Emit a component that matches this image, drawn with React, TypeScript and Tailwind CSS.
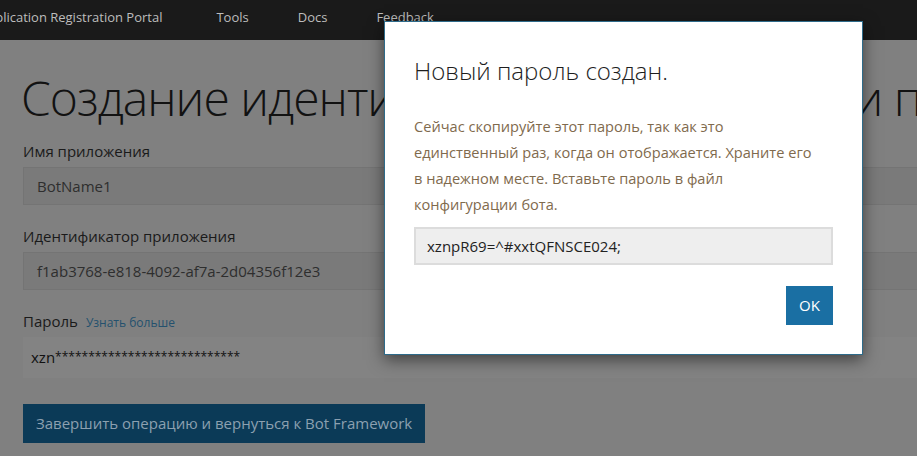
import React from 'react'

const font = { fontFamily: '"Open Sans", "Noto Sans", Arial, sans-serif' }

function Field({ label, value, extra, tall }: { label: string; value: React.ReactNode; extra?: string; tall?: boolean }) {
  return (
    <div className="mb-[21px]">
      <div className="flex items-baseline gap-[8px] h-[20px] leading-[20px] mb-[6px]">
        <span className="text-[15px] text-[#1a1a1a]">{label}</span>
        {extra && <span className="text-[12px] text-[#24516e]">{extra}</span>}
      </div>
      <div
        className={
          tall
            ? 'w-[960px] h-[41px] bg-[#838383] flex items-center px-[8px] text-[15px] text-[#111]'
            : 'w-[960px] h-[38px] bg-[#7a7a7a] border border-[#747474] flex items-center px-[13px] text-[15px] text-[#2e2e2e]'
        }
      >
        {value}
      </div>
    </div>
  )
}

export default function App() {
  return (
    <div className="relative w-[917px] h-[456px] overflow-hidden bg-[#808080]" style={font}>
      <nav className="h-[40px] bg-[#1a1a1a] flex items-center text-[13px] text-[#bdbdbd] pb-[5px] overflow-hidden whitespace-nowrap">
        <span className="-ml-[21px]">Application Registration Portal</span>
        <span className="ml-[54px]">Tools</span>
        <span className="ml-[49px]">Docs</span>
        <span className="ml-[49px]">Feedback</span>
      </nav>

      <main className="px-[23px]">
        <h1 className="mt-[28px] mb-[13px] -ml-[2px] text-[48px] leading-[60px] font-light tracking-[-1px] text-[#121212] whitespace-nowrap">
          Создание иденти<span className="tracking-[-3px]">фикатора приложения </span>и пароля
        </h1>
        <Field label="Имя приложения" value="BotName1" />
        <Field label="Идентификатор приложения" value="f1ab3768-e818-4092-af7a-2d04356f12e3" />
        <Field
          label="Пароль"
          extra="Узнать больше"
          tall
          value={
            <>
              xzn<span className="text-[12px] -mt-[2px]">****************************</span>
            </>
          }
        />
        <button className="mt-[5px] h-[39px] px-[13px] bg-[#0b3a57] text-[15px] text-[#8ca0b0]">
          Завершить операцию и вернуться к Bot Framework
        </button>
      </main>

      <div className="absolute left-[384px] top-[21px] w-[479px] h-[334px] bg-white border border-[#2e6b8a] shadow-[0_5px_15px_rgba(0,0,0,0.5)] px-[29px] pt-[32px]">
        <h2 className="text-[24px] leading-[34px] font-light text-[#1e1e1e]">Новый пароль создан.</h2>
        <p className="mt-[25px] text-[14.6px] leading-[26px] text-[#7f6a4d]">
          Сейчас скопируйте этот пароль, так как это
          <br />
          единственный раз, когда он отображается. Храните его
          <br />
          в надежном месте. Вставьте пароль в файл
          <br />
          конфигурации бота.
        </p>
        <div className="mt-[10px] h-[38px] bg-[#eeeeee] border-2 border-[#dcdcdc] flex items-center px-[11px] text-[15px] text-[#222]">
          xznpR69=^#xxtQFNSCE024;
        </div>
        <div className="mt-[21px] flex justify-end">
          <button className="w-[47px] h-[39px] bg-[#1a6fa3] text-white text-[15px]">OK</button>
        </div>
      </div>
    </div>
  )
}
